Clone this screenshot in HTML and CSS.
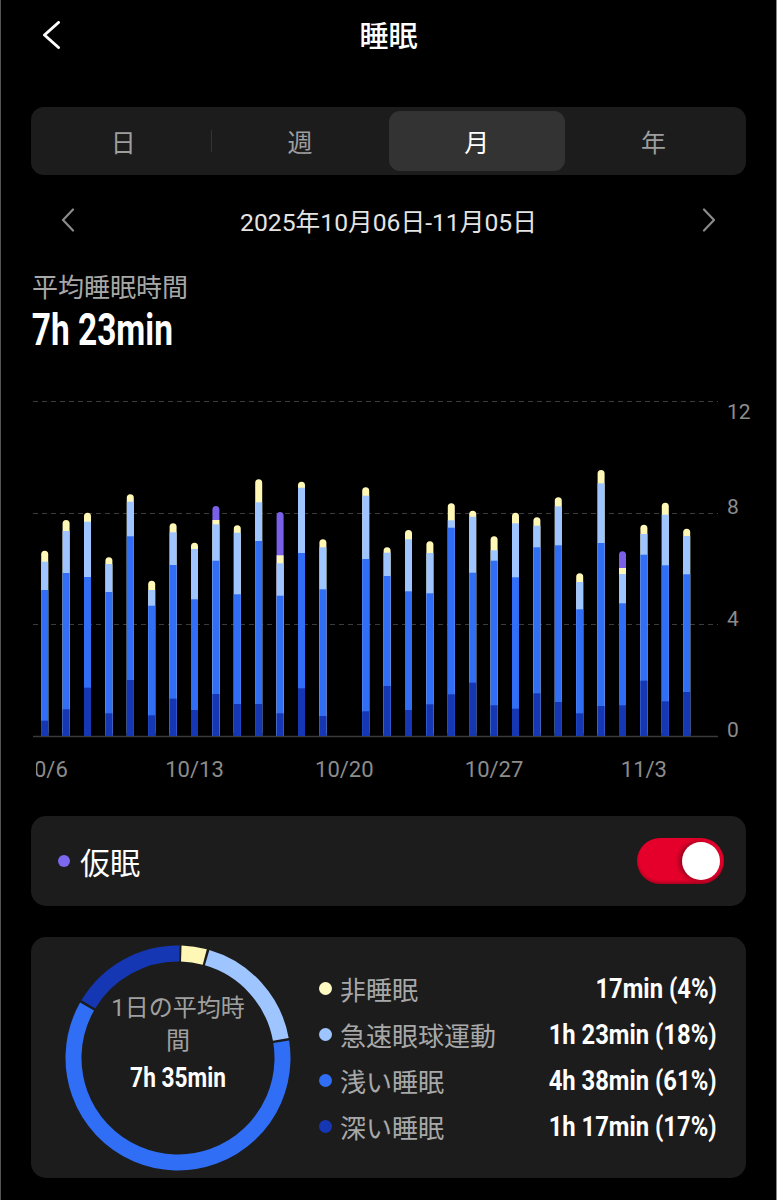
FILE: index.html
```html
<!DOCTYPE html>
<html lang="ja">
<head>
<meta charset="utf-8">
<title>睡眠</title>
<link rel="stylesheet" href="styles.css">
</head>
<body>
<div class="screen">
  <header class="topbar">
    <svg class="back" width="24" height="32" viewBox="0 0 24 32"><polyline points="18.5,1.5 4.5,14 18.5,26.5"/></svg>
    <h1 class="title">睡眠</h1>
    <span></span>
  </header>

  <div class="seg">
    <div class="seg-item sep">日</div>
    <div class="seg-item">週</div>
    <div class="seg-item active">月</div>
    <div class="seg-item">年</div>
  </div>

  <div class="date-row">
    <svg class="chev" width="14" height="24" viewBox="0 0 14 24"><polyline points="12,1.5 2,12 12,22.5"/></svg>
    <span class="date-text">2025年10月06日-11月05日</span>
    <svg class="chev" width="14" height="24" viewBox="0 0 14 24"><polyline points="2,1.5 12,12 2,22.5"/></svg>
  </div>

  <div class="avg-label">平均睡眠時間</div>
  <div class="avg-value"><span class="cond">7h 23min</span></div>

  <svg class="chart" width="715" height="390" viewBox="31 396 715 390">
    <defs>
      <clipPath id="xclip"><rect x="36" y="740" width="700" height="50"/></clipPath>
    </defs>
    <g class="grid">
      <line x1="33" y1="401.5" x2="718" y2="401.5"/>
      <line x1="33" y1="513.5" x2="718" y2="513.5"/>
      <line x1="33" y1="624.5" x2="718" y2="624.5"/>
    </g>
    <line class="base" x1="33" y1="736.5" x2="718" y2="736.5"/>
    <text class="ylab" x="727" y="419">12</text>
    <text class="ylab" x="727" y="514">8</text>
    <text class="ylab" x="727" y="626">4</text>
    <text class="ylab" x="727" y="737">0</text>
    <g clip-path="url(#xclip)">
      <text class="xlab" x="44.7" y="777">10/6</text>
      <text class="xlab" x="194.5" y="777">10/13</text>
      <text class="xlab" x="344.3" y="777">10/20</text>
      <text class="xlab" x="494.1" y="777">10/27</text>
      <text class="xlab" x="643.9" y="777">11/3</text>
    </g>
    <g class="bars">
      <rect class="aw" x="41.2" y="550.7" width="7" height="185.3" rx="3.5"/><rect class="rem" x="41.2" y="561.7" width="7" height="174.3"/><rect class="lt" x="41.2" y="590" width="7" height="146"/><rect class="dp" x="41.2" y="720.7" width="7" height="15.3"/>
      <rect class="aw" x="62.6" y="520" width="7" height="216" rx="3.5"/><rect class="rem" x="62.6" y="531" width="7" height="205"/><rect class="lt" x="62.6" y="573" width="7" height="163"/><rect class="dp" x="62.6" y="709.3" width="7" height="26.7"/>
      <rect class="aw" x="84" y="512.7" width="7" height="223.3" rx="3.5"/><rect class="rem" x="84" y="521.7" width="7" height="214.3"/><rect class="lt" x="84" y="577" width="7" height="159"/><rect class="dp" x="84" y="687.7" width="7" height="48.3"/>
      <rect class="aw" x="105.4" y="557.3" width="7" height="178.7" rx="3.5"/><rect class="rem" x="105.4" y="564" width="7" height="172"/><rect class="lt" x="105.4" y="592" width="7" height="144"/><rect class="dp" x="105.4" y="713.3" width="7" height="22.7"/>
      <rect class="aw" x="126.8" y="494.3" width="7" height="241.7" rx="3.5"/><rect class="rem" x="126.8" y="501.7" width="7" height="234.3"/><rect class="lt" x="126.8" y="536.3" width="7" height="199.7"/><rect class="dp" x="126.8" y="680" width="7" height="56"/>
      <rect class="aw" x="148.2" y="580.7" width="7" height="155.3" rx="3.5"/><rect class="rem" x="148.2" y="590" width="7" height="146"/><rect class="lt" x="148.2" y="605.7" width="7" height="130.3"/><rect class="dp" x="148.2" y="715.3" width="7" height="20.7"/>
      <rect class="aw" x="169.6" y="523.3" width="7" height="212.7" rx="3.5"/><rect class="rem" x="169.6" y="532.3" width="7" height="203.7"/><rect class="lt" x="169.6" y="565" width="7" height="171"/><rect class="dp" x="169.6" y="698.7" width="7" height="37.3"/>
      <rect class="aw" x="191" y="542.7" width="7" height="193.3" rx="3.5"/><rect class="rem" x="191" y="549" width="7" height="187"/><rect class="lt" x="191" y="599.3" width="7" height="136.7"/><rect class="dp" x="191" y="710" width="7" height="26"/>
      <rect class="nap" x="212.4" y="506" width="7" height="230" rx="3.5"/><rect class="aw" x="212.4" y="520" width="7" height="216"/><rect class="rem" x="212.4" y="524.3" width="7" height="211.7"/><rect class="lt" x="212.4" y="560.7" width="7" height="175.3"/><rect class="dp" x="212.4" y="694" width="7" height="42"/>
      <rect class="aw" x="233.8" y="525.3" width="7" height="210.7" rx="3.5"/><rect class="rem" x="233.8" y="532.7" width="7" height="203.3"/><rect class="lt" x="233.8" y="594.3" width="7" height="141.7"/><rect class="dp" x="233.8" y="704" width="7" height="32"/>
      <rect class="aw" x="255.2" y="479.3" width="7" height="256.7" rx="3.5"/><rect class="rem" x="255.2" y="502.3" width="7" height="233.7"/><rect class="lt" x="255.2" y="541" width="7" height="195"/><rect class="dp" x="255.2" y="704" width="7" height="32"/>
      <rect class="nap" x="276.6" y="512" width="7" height="224" rx="3.5"/><rect class="aw" x="276.6" y="555.3" width="7" height="180.7"/><rect class="rem" x="276.6" y="563.3" width="7" height="172.7"/><rect class="lt" x="276.6" y="595.7" width="7" height="140.3"/><rect class="dp" x="276.6" y="713.3" width="7" height="22.7"/>
      <rect class="aw" x="298" y="481.7" width="7" height="254.3" rx="3.5"/><rect class="rem" x="298" y="487.7" width="7" height="248.3"/><rect class="lt" x="298" y="553" width="7" height="183"/><rect class="dp" x="298" y="688.3" width="7" height="47.7"/>
      <rect class="aw" x="319.4" y="539.3" width="7" height="196.7" rx="3.5"/><rect class="rem" x="319.4" y="547.3" width="7" height="188.7"/><rect class="lt" x="319.4" y="589.3" width="7" height="146.7"/><rect class="dp" x="319.4" y="716" width="7" height="20"/>
      <rect class="aw" x="362.2" y="487.3" width="7" height="248.7" rx="3.5"/><rect class="rem" x="362.2" y="495.7" width="7" height="240.3"/><rect class="lt" x="362.2" y="559" width="7" height="177"/><rect class="dp" x="362.2" y="711.3" width="7" height="24.7"/>
      <rect class="aw" x="383.6" y="547.3" width="7" height="188.7" rx="3.5"/><rect class="rem" x="383.6" y="552.7" width="7" height="183.3"/><rect class="lt" x="383.6" y="576" width="7" height="160"/><rect class="dp" x="383.6" y="686" width="7" height="50"/>
      <rect class="aw" x="405" y="530" width="7" height="206" rx="3.5"/><rect class="rem" x="405" y="539.3" width="7" height="196.7"/><rect class="lt" x="405" y="591.3" width="7" height="144.7"/><rect class="dp" x="405" y="710" width="7" height="26"/>
      <rect class="aw" x="426.4" y="541.3" width="7" height="194.7" rx="3.5"/><rect class="rem" x="426.4" y="553" width="7" height="183"/><rect class="lt" x="426.4" y="593.3" width="7" height="142.7"/><rect class="dp" x="426.4" y="704.3" width="7" height="31.7"/>
      <rect class="aw" x="447.8" y="503.3" width="7" height="232.7" rx="3.5"/><rect class="rem" x="447.8" y="520.3" width="7" height="215.7"/><rect class="lt" x="447.8" y="527.7" width="7" height="208.3"/><rect class="dp" x="447.8" y="694.3" width="7" height="41.7"/>
      <rect class="aw" x="469.2" y="510.7" width="7" height="225.3" rx="3.5"/><rect class="rem" x="469.2" y="516.7" width="7" height="219.3"/><rect class="lt" x="469.2" y="572.7" width="7" height="163.3"/><rect class="dp" x="469.2" y="682.7" width="7" height="53.3"/>
      <rect class="aw" x="490.6" y="536.3" width="7" height="199.7" rx="3.5"/><rect class="rem" x="490.6" y="550.3" width="7" height="185.7"/><rect class="lt" x="490.6" y="560.7" width="7" height="175.3"/><rect class="dp" x="490.6" y="705.3" width="7" height="30.7"/>
      <rect class="aw" x="512" y="512.7" width="7" height="223.3" rx="3.5"/><rect class="rem" x="512" y="523.3" width="7" height="212.7"/><rect class="lt" x="512" y="577.3" width="7" height="158.7"/><rect class="dp" x="512" y="708.7" width="7" height="27.3"/>
      <rect class="aw" x="533.4" y="517.3" width="7" height="218.7" rx="3.5"/><rect class="rem" x="533.4" y="525.7" width="7" height="210.3"/><rect class="lt" x="533.4" y="547.3" width="7" height="188.7"/><rect class="dp" x="533.4" y="693.3" width="7" height="42.7"/>
      <rect class="aw" x="554.8" y="497.3" width="7" height="238.7" rx="3.5"/><rect class="rem" x="554.8" y="506.3" width="7" height="229.7"/><rect class="lt" x="554.8" y="545.3" width="7" height="190.7"/><rect class="dp" x="554.8" y="702" width="7" height="34"/>
      <rect class="aw" x="576.2" y="573.3" width="7" height="162.7" rx="3.5"/><rect class="rem" x="576.2" y="582" width="7" height="154"/><rect class="lt" x="576.2" y="609.3" width="7" height="126.7"/><rect class="dp" x="576.2" y="713.3" width="7" height="22.7"/>
      <rect class="aw" x="597.6" y="470" width="7" height="266" rx="3.5"/><rect class="rem" x="597.6" y="483.3" width="7" height="252.7"/><rect class="lt" x="597.6" y="543" width="7" height="193"/><rect class="dp" x="597.6" y="706" width="7" height="30"/>
      <rect class="nap" x="619" y="551.3" width="7" height="184.7" rx="3.5"/><rect class="aw" x="619" y="568" width="7" height="168"/><rect class="rem" x="619" y="574" width="7" height="162"/><rect class="lt" x="619" y="603.3" width="7" height="132.7"/><rect class="dp" x="619" y="705.3" width="7" height="30.7"/>
      <rect class="aw" x="640.4" y="524.7" width="7" height="211.3" rx="3.5"/><rect class="rem" x="640.4" y="534" width="7" height="202"/><rect class="lt" x="640.4" y="554.7" width="7" height="181.3"/><rect class="dp" x="640.4" y="680.7" width="7" height="55.3"/>
      <rect class="aw" x="661.8" y="502.7" width="7" height="233.3" rx="3.5"/><rect class="rem" x="661.8" y="514.7" width="7" height="221.3"/><rect class="lt" x="661.8" y="565.3" width="7" height="170.7"/><rect class="dp" x="661.8" y="701.3" width="7" height="34.7"/>
      <rect class="aw" x="683.2" y="528.7" width="7" height="207.3" rx="3.5"/><rect class="rem" x="683.2" y="536" width="7" height="200"/><rect class="lt" x="683.2" y="574.3" width="7" height="161.7"/><rect class="dp" x="683.2" y="692" width="7" height="44"/>
    </g>
  </svg>

  <div class="card nap-card">
    <span class="dot dot-nap"></span>
    <span class="nap-label">仮眠</span>
    <div class="toggle"><span class="knob"></span></div>
  </div>

  <div class="card summary">
    <div class="donut">
      <svg class="ring" width="226" height="226" viewBox="0 0 226 226">
        <g transform="rotate(-88.2 113 113)">
          <circle class="seg-aw" cx="113" cy="113" r="104.5" stroke-dasharray="23.8 700" stroke-dashoffset="0"/>
          <circle class="seg-rem" cx="113" cy="113" r="104.5" stroke-dasharray="115.7 700" stroke-dashoffset="-26.26"/>
          <circle class="seg-lt" cx="113" cy="113" r="104.5" stroke-dasharray="398 700" stroke-dashoffset="-144.45"/>
          <circle class="seg-dp" cx="113" cy="113" r="104.5" stroke-dasharray="109.1 700" stroke-dashoffset="-545"/>
        </g>
      </svg>
      <div class="donut-text">
        <div class="donut-label">1日の平均時間</div>
        <div class="donut-value"><span class="cond-c">7h 35min</span></div>
      </div>
    </div>
    <div class="legend">
      <div class="lg-name"><span class="dot lg-dot c-aw"></span>非睡眠</div>
      <div class="lg-val"><span class="cond-r">17min (4%)</span></div>
      <div class="lg-name"><span class="dot lg-dot c-rem"></span>急速眼球運動</div>
      <div class="lg-val"><span class="cond-r">1h 23min (18%)</span></div>
      <div class="lg-name"><span class="dot lg-dot c-lt"></span>浅い睡眠</div>
      <div class="lg-val"><span class="cond-r">4h 38min (61%)</span></div>
      <div class="lg-name"><span class="dot lg-dot c-dp"></span>深い睡眠</div>
      <div class="lg-val"><span class="cond-r">1h 17min (17%)</span></div>
    </div>
  </div>
</div>
</body>
</html>
```

FILE: styles.css
```css
* { box-sizing: border-box; }
html, body { margin: 0; padding: 0; background: #000; }
body {
  font-family: Roboto, "Noto Sans CJK JP", sans-serif;
  color: #fff;
}
.screen {
  width: 777px;
  min-height: 1200px;
  border-left: 1px solid #555;
  border-right: 1px solid #8a8a8a;
  padding: 0 30px;
}

/* header */
.topbar {
  height: 74px;
  display: grid;
  grid-template-columns: 1fr auto 1fr;
  align-items: center;
}
.back { display: block; margin-left: 9px; }
.back polyline { fill: none; stroke: #fff; stroke-width: 3; stroke-linecap: round; stroke-linejoin: round; }
.title {
  margin: 0;
  font-size: 29px;
  font-weight: 500;
  line-height: 74px;
}

/* segmented */
.seg {
  margin-top: 33px;
  height: 68px;
  background: #1c1c1c;
  border-radius: 13px;
  padding: 4px;
  display: grid;
  grid-template-columns: repeat(4, 1fr);
}
.seg-item {
  display: flex;
  align-items: center;
  justify-content: center;
  font-size: 25px;
  color: #9e9e9e;
  border-radius: 11px;
}
.seg-item.sep {
  background: linear-gradient(#333, #333) no-repeat right center / 1px 22px;
}
.seg-item.active { background: #333; color: #fff; }

/* date */
.date-row {
  margin-top: 25px;
  height: 40px;
  display: flex;
  align-items: center;
  justify-content: space-between;
  padding: 0 30px;
}
.chev { display: block; }
.chev polyline { fill: none; stroke: #8a8a8a; stroke-width: 2.2; stroke-linecap: round; stroke-linejoin: round; }
.date-text { font-size: 24.7px; color: #e4e4e4; }

/* average */
.avg-label {
  margin-top: 30px;
  font-size: 26px;
  line-height: 36px;
  color: #a8a8a8;
  padding-left: 1px;
}
.avg-value {
  height: 48px;
  line-height: 48px;
  font-size: 44px;
  font-weight: 700;
}
.cond { display: inline-block; transform: scaleX(0.76); transform-origin: left center; padding-left: 1px; }

/* chart */
.chart { display: block; margin-top: 42px; overflow: visible; }
.grid line { stroke: #3c3c3c; stroke-width: 1.2; stroke-dasharray: 5 4; }
.base { stroke: #3a3a3a; stroke-width: 1.5; }
.ylab { font-family: Roboto, sans-serif; font-size: 21px; fill: #8c8c8c; }
.xlab { font-family: Roboto, sans-serif; font-size: 22px; fill: #8c8c8c; text-anchor: middle; }
.aw { fill: #fff7b5; }
.rem { fill: #9ec5ff; }
.lt { fill: #2f6ef5; }
.dp { fill: #1637b3; }
.nap { fill: #7a5fe8; }

/* cards */
.card { background: #1c1c1c; border-radius: 15px; }
.nap-card {
  margin-top: 30px;
  height: 90px;
  display: flex;
  align-items: center;
  padding: 0 22px 0 27px;
}
.dot { display: inline-block; border-radius: 50%; flex: none; }
.dot-nap { width: 12px; height: 12px; background: #7b68ee; }
.nap-label { flex: 1; margin-left: 10px; font-size: 30px; }
.toggle {
  width: 87px;
  height: 46px;
  border-radius: 23px;
  background: #e5002b;
  box-shadow: inset 0 -2px 3px rgba(0,0,0,0.25);
  display: flex;
  align-items: center;
  justify-content: flex-end;
  padding: 4px;
}
.knob {
  width: 38px;
  height: 38px;
  border-radius: 50%;
  background: #fff;
  box-shadow: -3px 0 5px rgba(0,0,0,0.35);
}

.summary {
  margin-top: 31px;
  height: 241px;
  display: flex;
  align-items: center;
  padding: 0 29px 0 34px;
}
.donut {
  display: grid;
  width: 226px;
  height: 226px;
  flex: none;
}
.donut > * { grid-area: 1 / 1; }
.ring { display: block; }
.ring circle { fill: none; stroke-width: 16; }
.seg-aw { stroke: #fff7b5; }
.seg-rem { stroke: #9ec5ff; }
.seg-lt { stroke: #2f6ef5; }
.seg-dp { stroke: #1637b3; }
.donut-text {
  place-self: center;
  width: 150px;
  text-align: center;
  margin-top: -26px;
}
.donut-label { font-size: 24px; line-height: 33px; color: #a0a0a0; }
.donut-value { font-size: 27px; font-weight: 700; line-height: 40px; }
.cond-c { display: inline-block; transform: scaleX(0.84); }

.legend {
  flex: 1;
  margin-left: 28px;
  display: grid;
  grid-template-columns: 1fr auto;
  grid-auto-rows: 46px;
  align-items: center;
}
.lg-name {
  display: flex;
  align-items: center;
  font-size: 26px;
  color: #a8a8a8;
}
.lg-dot { width: 13px; height: 13px; margin-right: 8px; }
.c-aw { background: #fffac2; }
.c-rem { background: #9ec5ff; }
.c-lt { background: #2f6ef5; }
.c-dp { background: #1637b3; }
.lg-val { font-size: 28px; font-weight: 700; text-align: right; }
.cond-r { display: inline-block; transform: scaleX(0.85); transform-origin: right center; }
```
